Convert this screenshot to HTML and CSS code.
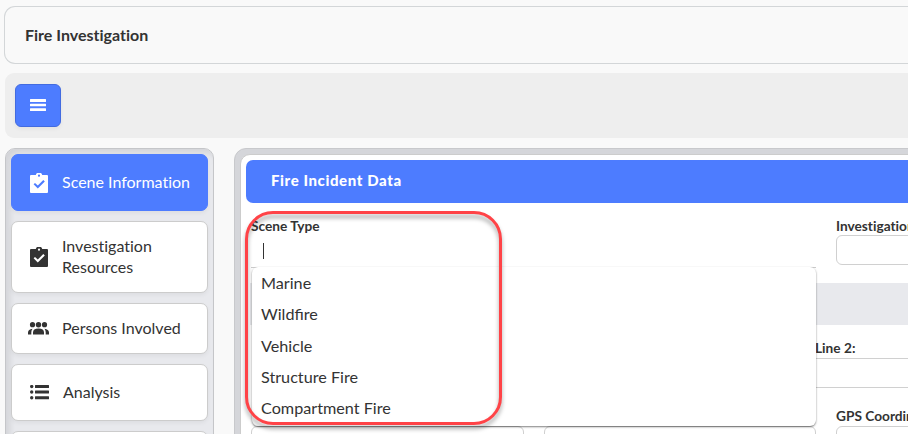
FILE: index.html
```html
<!DOCTYPE html>
<html lang="en">

<head>
  <meta charset="utf-8">
  <title>Fire Investigation</title>
  <link rel="stylesheet" href="styles.css">
</head>

<body>
  <header class="page-header">
    <h1>Fire Investigation</h1>
  </header>

  <div class="toolbar">
    <button class="menu-btn" type="button" aria-label="Menu">
      <svg width="16" height="12" viewBox="0 0 16 12"><path d="M.5 0h15q.5 0 .5.5v2q0 .5-.5.500H.5Q0 3 0 2.500v-2Q0 0 .5 0zM.5 4.700h15q.5 0 .5.500v1.600q0 .5-.5.500H.5q-.5 0-.5-.5V5.200q0-.5.5-.5zM.5 9.200h15q.5 0 .5.500v1.800q0 .5-.5.500H.5q-.5 0-.5-.5V9.700q0-.5.5-.5z" fill="#fff" /></svg>
    </button>
  </div>

  <div class="layout">
    <nav class="sidebar">
      <a class="nav-item active">
        <svg class="icon" viewBox="0 0 20 20"><path fill-rule="evenodd" d="M2 2h4.800a3.300 3.300 0 0 1 6.400 0H18q1 0 1 1v16q0 1-1 1H2q-1 0-1-1V3q0-1 1-1zM10 1.600a1.100 1.100 0 1 0 0 2.200a1.100 1.100 0 1 0 0-2.200zM6 9.900l-1.400 1.400 4.200 4.200 7-7-1.500-1.500-5.500 5.600z" /></svg>
        <span>Scene Information</span>
      </a>
      <a class="nav-item tall">
        <svg class="icon" viewBox="0 0 20 20"><path fill-rule="evenodd" d="M2 2h4.800a3.300 3.300 0 0 1 6.400 0H18q1 0 1 1v16q0 1-1 1H2q-1 0-1-1V3q0-1 1-1zM10 1.600a1.100 1.100 0 1 0 0 2.200a1.100 1.100 0 1 0 0-2.200zM6 9.900l-1.400 1.400 4.200 4.200 7-7-1.500-1.500-5.500 5.600z" /></svg>
        <span>Investigation Resources</span>
      </a>
      <a class="nav-item short">
        <svg class="icon people" viewBox="0 0 21 13">
          <circle cx="4.500" cy="2.700" r="2.600" /><circle cx="10.500" cy="2.700" r="2.700" /><circle cx="16.500" cy="2.700" r="2.600" />
          <path d="M5 12.500v-2q0-3.900 5.500-3.900t5.500 3.900v2zM0 12.500v-2Q.2 7.400 4.500 6.800q-1.200 1.500-1.200 3.500v2.200zM21 12.500v-2q-.2-3.100-4.500-3.700 1.200 1.500 1.200 3.500v2.200z" />
        </svg>
        <span>Persons Involved</span>
      </a>
      <a class="nav-item">
        <svg class="icon list" viewBox="0 0 19 15">
          <circle cx="1.700" cy="1.600" r="1.700" /><circle cx="1.700" cy="7" r="1.700" /><circle cx="1.700" cy="12.700" r="1.700" />
          <path d="M5.500 0h13q.5 0 .5.500v2q0 .5-.5.500h-13q-.5 0-.5-.5v-2q0-.5.500-.5zM5.500 5.500h13q.5 0 .5.500v2q0 .5-.5.500h-13q-.5 0-.5-.5V6q0-.5.500-.5zM5.500 11.200h13q.5 0 .5.500v2q0 .5-.5.500h-13q-.5 0-.5-.5v-2q0-.5.500-.5z" />
        </svg>
        <span>Analysis</span>
      </a>
      <a class="nav-item"></a>
    </nav>

    <main class="panel">
      <div class="panel-body">
        <h2>Fire Incident Data</h2>
        <div class="form">
          <div class="form-row">
            <div class="field wide">
              <label>Scene Type</label>
              <div class="select">
                <span class="caret"></span>
                <ul class="options">
                  <li>Marine</li>
                  <li>Wildfire</li>
                  <li>Vehicle</li>
                  <li>Structure Fire</li>
                  <li>Compartment Fire</li>
                </ul>
              </div>
            </div>
            <div class="field">
              <label>Investigation</label>
              <div class="input"></div>
            </div>
          </div>

          <div class="section-bar"></div>

          <div class="form-row address">
            <div class="field line-two">
              <label>Line 2:</label>
              <div class="input"></div>
            </div>
          </div>

          <div class="form-row bottom">
            <div class="field"><label></label><div class="input"></div></div>
            <div class="field"><label></label><div class="input"></div></div>
            <div class="field"><label>GPS Coordinates</label><div class="input"></div></div>
          </div>
        </div>
      </div>
    </main>
  </div>

  <div class="highlight"></div>
</body>

</html>
```

FILE: styles.css
```css
* {
  box-sizing: border-box;
}

body {
  margin: 0;
  height: 434px;
  padding: 6px 0 0 4px;
  overflow: hidden;
  background: #f9f9f9;
  color: #333;
  font-family: Lato, "Liberation Sans", sans-serif;
  font-size: 16px;
  font-variant-ligatures: none;
}

.page-header {
  height: 58px;
  padding: 0 0 2px 20px;
  display: flex;
  align-items: center;
  border: 1px solid #d3d6d8;
  border-right: none;
  border-radius: 11px 0 0 11px;
}

.page-header h1 {
  margin: 0;
  font-size: 16px;
  font-weight: 700;
}

.toolbar {
  height: 65px;
  margin: 9px 0 0 1px;
  padding: 11px 10px;
  background: #eee;
  border-radius: 9px 0 0 9px;
}

.menu-btn {
  display: flex;
  align-items: center;
  justify-content: center;
  width: 46px;
  height: 43px;
  padding: 0 0 1px;
  background: #4d7cff;
  border: 1px solid #426be0;
  border-radius: 6px;
  box-shadow: 0 2px 4px rgba(0, 0, 0, 0.05);
}

.layout {
  display: flex;
  gap: 20px;
  height: 286px;
  margin: 10px 0 0 1px;
  overflow: hidden;
}

.sidebar {
  flex: none;
  width: 209px;
  height: 340px;
  padding: 5px;
  display: flex;
  flex-direction: column;
  gap: 10px;
  background: #e8e9ed;
  border: 1px solid #c5c6c9;
  border-radius: 10px;
  box-shadow: inset 4px 4px 6px rgba(0, 0, 0, 0.09);
}

.nav-item {
  flex: none;
  height: 57px;
  padding: 0 8px 0 17px;
  display: flex;
  align-items: center;
  gap: 13px;
  background: #fff;
  border: 1px solid #ccc;
  border-radius: 7px;
  line-height: 21px;
  box-shadow: 0 2px 4px rgba(0, 0, 0, 0.05);
}

.nav-item span {
  padding-bottom: 2px;
}

.nav-item.active {
  background: #4d7cff;
  border-color: #4d7cff;
  color: #fff;
}

.nav-item.tall {
  height: 72px;
}

.nav-item.tall span {
  width: 110px;
}

.nav-item.short {
  height: 51px;
}

.icon {
  flex: none;
  width: 20px;
  height: 20px;
  fill: currentColor;
}

.icon.people {
  width: 21px;
  height: 13px;
  margin: 0 0 1px -1px;
}

.icon.list {
  width: 19px;
  height: 15px;
  margin: 0 1px 0 1px;
}

.panel {
  flex: none;
  width: 710px;
  height: 340px;
  padding: 5px;
  background: #d5d6da;
  border: 1px solid #c8c9cc;
  border-radius: 12px;
}

.panel-body {
  height: 340px;
  padding: 5px;
  background: #fff;
  border: 1px solid #ccc;
  border-radius: 10px;
}

.panel-body h2 {
  margin: 0;
  height: 43px;
  padding-left: 25px;
  background: #4d7cff;
  border-radius: 7px 0 0 7px;
  color: #fff;
  font-size: 15px;
  font-weight: 900;
  line-height: 41px;
  letter-spacing: 0.6px;
}

.form {
  padding: 15px 0 0 5px;
}

.form-row {
  display: flex;
  gap: 20px;
}

.field {
  flex: none;
  width: 273px;
}

.field.wide {
  width: 565px;
}

.field label {
  display: block;
  height: 17px;
  font-size: 13.7px;
  font-weight: 700;
  line-height: 15px;
  white-space: nowrap;
}

.input {
  height: 30px;
  border: 1px solid #d0d0d0;
  border-radius: 6px;
}

.select {
  position: relative;
  height: 33px;
  border-bottom: 1px solid #ccc;
}

.caret {
  display: block;
  width: 1px;
  height: 16px;
  margin-left: 12px;
  background: #333;
  transform: translateY(8px);
}

.options {
  position: absolute;
  z-index: 1;
  top: 32px;
  left: 1px;
  right: 0;
  height: 159px;
  margin: 0;
  padding: 0 9px;
  list-style: none;
  background: #fff;
  border-radius: 6px;
  box-shadow: 0 1px 2px rgba(0, 0, 0, 0.5);
  font-size: 16.2px;
  font-variant-ligatures: normal;
}

.options li {
  height: 31.25px;
  line-height: 31px;
}

.section-bar {
  height: 42px;
  margin: 15px 0 0 -1px;
  background: #e8e9ed;
}

.address {
  margin-top: 15px;
  padding-left: 420px;
}

.line-two {
  width: 420px;
}

.line-two label {
  padding-left: 144px;
  height: 18px;
}

.bottom {
  margin-top: 20px;
}

.bottom .field {
  width: 272.5px;
}

.bottom label {
  height: 18px;
}

/* annotation drawn over the dropdown */
.highlight {
  position: absolute;
  z-index: 2;
  left: 245px;
  top: 211px;
  width: 257px;
  height: 214px;
  border: 3px solid #ff4347;
  border-radius: 28px;
  filter: drop-shadow(0 4px 2px rgba(0, 0, 0, 0.35));
}
```
